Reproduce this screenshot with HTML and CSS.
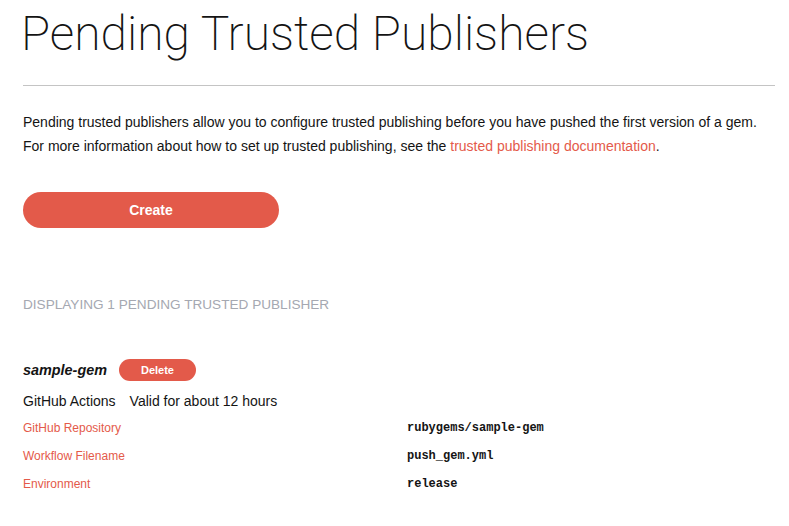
FILE: index.html
```html
<!DOCTYPE html>
<html>
<head>
<meta charset="utf-8">
<link rel="stylesheet" href="styles.css">
</head>
<body>
<main class="page">
  <h1 class="title">Pending Trusted Publishers</h1>
  <hr class="rule">
  <p class="intro">Pending trusted publishers allow you to configure trusted publishing before you have pushed the first version of a gem.<br>For more information about how to set up trusted publishing, see the <a class="link" href="#">trusted publishing documentation</a>.</p>
  <button class="btn-create">Create</button>
  <p class="count">Displaying 1 pending trusted publisher</p>
  <section class="publisher">
    <div class="pub-head">
      <span class="gem-name">sample-gem</span>
      <button class="btn-delete">Delete</button>
    </div>
    <div class="pub-meta"><span>GitHub Actions</span><span>Valid for about 12 hours</span></div>
    <dl class="fields">
      <dt>GitHub Repository</dt><dd>rubygems/sample-gem</dd>
      <dt>Workflow Filename</dt><dd>push_gem.yml</dd>
      <dt>Environment</dt><dd>release</dd>
    </dl>
  </section>
</main>
</body>
</html>
```
FILE: styles.css
```css
html, body { margin: 0; padding: 0; background: #fff; }
body { font-family: "Liberation Sans", Arial, sans-serif; color: #141414; }
.page { padding: 0 14px 0 23px; }
.title {
  font-family: Roboto, sans-serif;
  font-weight: 200;
  font-size: 48px;
  line-height: 56px;
  margin: 6px 0 0 -2px;
  color: #141414;
}
.rule { border: 0; border-top: 1px solid #c4c4c4; margin: 23px 0 0 0; }
.intro { font-size: 14px; line-height: 24px; margin: 24px 0 0 0; }
.link { color: #e45a4a; text-decoration: none; }
.btn-create {
  display: block;
  margin-top: 34px;
  width: 256px; height: 36px;
  border: 0; border-radius: 18px;
  background: #e35a4a; color: #fff;
  font-family: "Liberation Sans", Arial, sans-serif;
  font-weight: bold; font-size: 14px;
}
.count { margin: 68px 0 0 0; font-size: 13.6px; line-height: 18px; color: #a5a8b1; text-transform: uppercase; }
.publisher { margin-top: 45px; }
.pub-head { display: flex; align-items: center; gap: 12px; }
.gem-name { font-weight: bold; font-style: italic; font-size: 14.4px; }
.btn-delete {
  width: 77px; height: 22px;
  border: 0; border-radius: 11px;
  background: #e35a4a; color: #fff;
  font-family: "Liberation Sans", Arial, sans-serif;
  font-weight: bold; font-size: 11px;
}
.pub-meta { display: flex; gap: 14px; font-size: 14px; margin-top: 11px; line-height: 18px; }
.fields { display: grid; grid-template-columns: 384px 1fr; row-gap: 14px; margin: 11px 0 0 0; }
.fields dt { color: #e45a4a; font-size: 12px; line-height: 14px; }
.fields dd { margin: 0; font-family: "Liberation Mono", "Courier New", monospace; font-weight: bold; font-size: 12px; line-height: 14px; color: #141414; }
```
